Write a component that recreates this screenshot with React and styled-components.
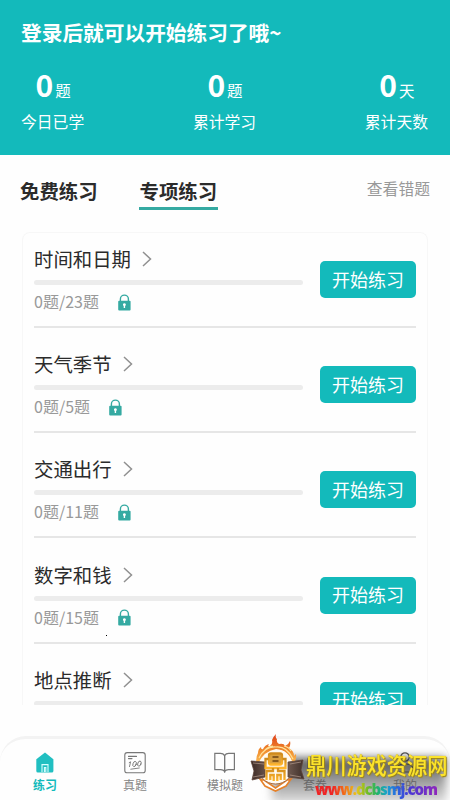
import React from 'react';
import styled, { createGlobalStyle } from 'styled-components';

const COLOR_TEAL = '#13babb';
const COLOR_ACCENT = '#35aaa2';
const COLOR_TEXT = '#2b2b2b';
const COLOR_MUTED = '#999';
const COLOR_LINE = '#e6e6e6';

const GlobalStyle = createGlobalStyle`
  * {
    box-sizing: border-box;
  }

  body {
    margin: 0;
    background: #fff;
    font-family: 'Noto Sans CJK SC', sans-serif;
  }
`;

const Screen = styled.div`
  position: relative;
  display: flex;
  flex-direction: column;
  width: 450px;
  height: 800px;
  overflow: hidden;
  background: #fefefe;
`;

const Header = styled.header`
  flex: none;
  height: 155px;
  padding: 17px 22px 0 21px;
  color: #fff;
  background: ${COLOR_TEAL};
`;

const Greeting = styled.h1`
  margin: 0;
  font-size: 20.7px;
  font-weight: 700;
  line-height: 30px;
`;

const Stats = styled.div`
  display: flex;
  justify-content: space-between;
  margin-top: 16px;
`;

const Stat = styled.div`
  display: flex;
  flex-direction: column;
  align-items: center;
`;

const StatValue = styled.div`
  display: flex;
  align-items: baseline;
  height: 44px;
  padding-left: 1px;
  font-size: 30px;
  font-weight: 700;
  line-height: 42px;
`;

const StatUnit = styled.span`
  margin-left: 2px;
  font-size: 15.5px;
  font-weight: 400;
`;

const StatLabel = styled.div`
  font-size: 15.8px;
  line-height: 29px;
`;

const Tabs = styled.div`
  display: flex;
  flex: none;
  align-items: flex-start;
  height: 77px;
  padding: 21px 20px 0 19px;
`;

const Tab = styled.div`
  margin-right: 40px;
  padding: 0 1px 2px;
  border-bottom: 3px solid ${props => (props.$active ? COLOR_ACCENT : 'transparent')};
  color: ${COLOR_TEXT};
  font-size: 19.4px;
  font-weight: 700;
  line-height: 29px;
`;

const MistakesLink = styled.a`
  margin-left: auto;
  padding-top: 1px;
  color: ${COLOR_MUTED};
  font-size: 15.8px;
  line-height: 24px;
`;

const Card = styled.ul`
  flex: none;
  height: 473px;
  margin: 0 22px;
  padding: 0 11px;
  overflow: hidden;
  list-style: none;
  border: 1px solid #f7f7f7;
  border-bottom: 0;
  border-radius: 8px 8px 0 0;
`;

const Row = styled.li`
  height: 105.2px;
  padding-top: 11px;
`;

const RowContent = styled.div`
  display: flex;
  justify-content: space-between;
  height: 84px;
  border-bottom: 2px solid ${COLOR_LINE};
`;

const RowMain = styled.div`
  width: 269px;
`;

const RowTitle = styled.div`
  display: flex;
  align-items: center;
  height: 30px;
  color: ${COLOR_TEXT};
  font-size: 19.4px;
  line-height: 30px;

  svg {
    margin-left: 11px;
  }
`;

const Track = styled.div`
  height: 5px;
  margin-top: 6px;
  border-radius: 3px;
  background: #ececec;
`;

const Progress = styled.div`
  display: flex;
  align-items: center;
  height: 24px;
  margin-top: 4px;
  color: ${COLOR_MUTED};
  font-size: 16px;

  svg {
    margin: 2px 0 0 18.6px;
  }
`;

const StartButton = styled.button`
  width: 96px;
  height: 37px;
  margin-top: 17px;
  padding: 0 0 2px;
  border: 0;
  border-radius: 5px;
  color: #fff;
  background: ${COLOR_TEAL};
  font-family: inherit;
  font-size: 18px;
  line-height: 34px;
`;

const NavBar = styled.nav`
  display: grid;
  grid-template-columns: repeat(5, 1fr);
  flex: none;
  height: 64px;
  margin-top: 31px;
  padding-top: 13px;
  border-top: 3px solid #f3f3f3;
  border-radius: 26px 26px 0 0;
`;

const NavItem = styled.div`
  display: flex;
  flex-direction: column;
  align-items: center;
  color: ${props => (props.$active ? COLOR_TEAL : '#858585')};
  font-size: 12px;
  font-weight: ${props => (props.$active ? 700 : 400)};
  line-height: 18px;

  svg {
    margin-bottom: 2px;
  }
`;

const Speck = styled.i`
  position: absolute;
  top: 635px;
  left: 106px;
  width: 1px;
  height: 1px;
  background: #000;
`;

const Watermark = styled.div`
  position: absolute;
  top: 733px;
  left: 248px;
  width: 202px;
  height: 67px;
  overflow: hidden;
`;

const Haze = styled.div`
  position: absolute;
  top: 25px;
  left: 24px;
  width: 174px;
  height: 46px;
  background: linear-gradient(rgba(30, 30, 30, 0.8), rgba(80, 80, 80, 0.6) 45%, rgba(120, 120, 120, 0.2));
  filter: blur(5px);
`;

const Emblem = styled.svg`
  position: absolute;
  top: 0;
  left: 0;
`;

const SiteName = styled.div`
  position: absolute;
  top: 17px;
  left: 58px;
  color: #fbe32c;
  font-size: 20.2px;
  font-weight: 500;
  line-height: 30px;
  white-space: nowrap;
  text-shadow: 0 0 1px #b89b12, 1px 1px 1px #9a8212;
  transform: scaleY(1.14);
`;

const SiteUrl = styled.div`
  position: absolute;
  top: 46px;
  left: 67px;
  color: transparent;
  background: linear-gradient(90deg, #ef2424 0 14%, #f36c18 24%, #e9c51c 34%, #72bd24 43%, #20b46b 51%, #1aa2d0 59%, #2868e0 67%, #4b37d4 78%, #8e27bb 100%);
  background-clip: text;
  font-family: 'Open Sans', sans-serif;
  font-size: 15px;
  font-weight: 800;
  letter-spacing: -1.1px;
  line-height: 20px;
`;

const Chevron = () => (
  <svg width="10" height="16" viewBox="0 0 10 16" fill="none" stroke="#909090" strokeWidth="1.5">
    <path d="M1 1l7.5 7L1 15" />
  </svg>
);

const Lock = () => (
  <svg width="13" height="17" viewBox="0 0 13 17">
    <path d="M2.4 8V5.1a4 4 0 0 1 8 0V8" fill="none" stroke={COLOR_ACCENT} strokeWidth="1.4" />
    <rect x=".2" y="6.7" width="12.4" height="9.8" rx="1" fill={COLOR_ACCENT} />
    <path d="M6.4 9.2a1.5 1.5 0 0 1 .7 2.8v1.9H5.7V12a1.5 1.5 0 0 1 .7-2.8z" fill="#fff" />
  </svg>
);

const HomeIcon = () => (
  <svg width="22" height="22" viewBox="0 0 22 22">
    <path d="M11 .6l8.4 6.6V19q0 1.6-1.6 1.6H3.9q-1.6 0-1.6-1.6V7.2z" fill="#21bfc1" />
    <path d="M8 20v-7.4h6V20M10.4 20v-4.4h1.4V20" fill="none" stroke="#d9ffff" strokeWidth="1.1" />
  </svg>
);

const PaperIcon = () => (
  <svg width="22" height="22" viewBox="0 0 22 22" fill="none" stroke="#777" strokeWidth="1.1" strokeLinecap="round">
    <rect x=".8" y=".6" width="20.4" height="20.2" rx="2.4" />
    <path d="M4.5 4.4h8M4.5 6.6h3.5" />
    <path d="M5.2 10.6l1.4-.8-1.1 4.8M6.8 17.2l8.5-1.2" strokeWidth=".9" />
    <ellipse cx="10.6" cy="12" rx="1.6" ry="2.7" transform="rotate(20 10.6 12)" strokeWidth=".9" />
    <ellipse cx="15.4" cy="11.6" rx="1.6" ry="2.7" transform="rotate(20 15.4 11.6)" strokeWidth=".9" />
  </svg>
);

const BookIcon = () => (
  <svg width="22" height="22" viewBox="0 0 22 22" fill="none" stroke="#777" strokeWidth="1.2">
    <path d="M10.6 3.6Q9.3 1.4 6.5 1.4H.8v16.2h6q2.6 0 3.8 1.8 1.2-1.8 3.8-1.8h6V1.4h-5.7q-2.8 0-4.1 2.2zV20.4" />
    <path d="M10.6 3.6v16.8" />
  </svg>
);

const PlanIcon = () => (
  <svg width="22" height="22" viewBox="0 0 22 22" fill="none" stroke="#777" strokeWidth="1.2">
    <rect x="4" y="5" width="14" height="14" rx="2" />
    <path d="M7 9h8M7 13h8" />
  </svg>
);

const UserIcon = () => (
  <svg width="22" height="22" viewBox="0 0 22 22" fill="none" stroke="#555" strokeWidth="1.2">
    <circle cx="11" cy="5" r="4.2" />
    <path d="M3 20v-3q0-5 8-5t8 5v3z" />
  </svg>
);

const stats = [
  { unit: '题', label: '今日已学' },
  { unit: '题', label: '累计学习' },
  { unit: '天', label: '累计天数' },
];

const topics = [
  { title: '时间和日期', total: 23 },
  { title: '天气季节', total: 5 },
  { title: '交通出行', total: 11 },
  { title: '数字和钱', total: 15 },
  { title: '地点推断' },
];

const navItems = [
  { label: '练习', Icon: HomeIcon },
  { label: '真题', Icon: PaperIcon },
  { label: '模拟题', Icon: BookIcon },
  { label: '套卷', Icon: PlanIcon },
  { label: '我的', Icon: UserIcon },
];

const SiteEmblem = () => (
  <Emblem width="66" height="67" viewBox="0 0 66 67">
    <defs>
      <linearGradient id="flame" x2="0" y2="1">
        <stop offset="0" stopColor="#dd3c18" />
        <stop offset=".5" stopColor="#f08a2c" />
        <stop offset="1" stopColor="#ffc65c" />
      </linearGradient>
      <linearGradient id="gold" x2="0" y2="1">
        <stop offset="0" stopColor="#cf8a1c" />
        <stop offset="1" stopColor="#ffb52c" />
      </linearGradient>
      <linearGradient id="ribbon" x2="1" y2="0">
        <stop offset="0" stopColor="#3c2a25" />
        <stop offset=".5" stopColor="#8d7468" />
        <stop offset="1" stopColor="#40302a" />
      </linearGradient>
    </defs>
    <path d="M12 46l5 7 10.5 5L38 53l5-7-4 1-11.5 8L16 47z" fill="#fff" stroke="#e6822a" strokeWidth="1.6" />
    <circle cx="27.5" cy="33" r="18" fill="#fffaf2" stroke="#a8683a" strokeWidth="1" />
    <path d="M9 33Q7 25 10 20q0-4 3-6 0 3 2 2 2-4 6-5-2 3 1 2 3-2 2-6 1-3 4-6-1 4 1 5-1 3 2 5 5-1 6 2 4-2 5-5 1 4-1 7 5 3 5 8l2-2q1 6-3 11Q42 17 28 16 15 18 9 33z" fill="url(#flame)" />
    <path d="M11 25Q17 13 28 14q11-1 17 12M17 17q4-4 8-4M36 13q5 1 7 5" fill="none" stroke="#ffe29a" strokeWidth="1.2" />
    <path d="M3 28l14 1v15l-13 3 2-9zM40 29l15-2-2 10 3 9-16-2z" fill="url(#ribbon)" stroke="#5d443a" strokeWidth=".8" />
    <path d="M5 30l11 1M5 44l11-2M42 31l11-2M42 42l11 2" stroke="#b49b8c" strokeWidth=".7" />
    <rect x="18" y="20" width="20" height="28" rx="4" fill="#fffaf0" />
    <g fill="none" stroke="url(#gold)" strokeWidth="2.3" transform="translate(-1.5 0)">
      <rect x="22.5" y="20.5" width="13" height="11" rx="2" fill="#d9a040" />
      <path d="M22 26h-3v9h20v-9h-3" />
      <path d="M26.5 35v3H20v9M31.5 35v3H38v9M23.8 47v-5h3.4v6M34.2 47v-5h-3.4v6" />
    </g>
    <path d="M24.5 24h6M24.5 28h6" stroke="#6b4315" strokeWidth="1.3" />
  </Emblem>
);

const App = () => (
  <Screen>
    <GlobalStyle />
    <Header>
      <Greeting>登录后就可以开始练习了哦~</Greeting>
      <Stats>
        {stats.map(stat => (
          <Stat key={stat.label}>
            <StatValue>
              0
              <StatUnit>{stat.unit}</StatUnit>
            </StatValue>
            <StatLabel>{stat.label}</StatLabel>
          </Stat>
        ))}
      </Stats>
    </Header>
    <Tabs>
      <Tab>免费练习</Tab>
      <Tab $active>专项练习</Tab>
      <MistakesLink>查看错题</MistakesLink>
    </Tabs>
    <Card>
      {topics.map(topic => (
        <Row key={topic.title}>
          <RowContent>
            <RowMain>
              <RowTitle>
                {topic.title}
                <Chevron />
              </RowTitle>
              <Track />
              {
                topic.total &&
                <Progress>
                  {`0题/${topic.total}题`}
                  <Lock />
                </Progress>
              }
            </RowMain>
            <StartButton>开始练习</StartButton>
          </RowContent>
        </Row>
      ))}
    </Card>
    <NavBar>
      {navItems.map(({ label, Icon }, index) => (
        <NavItem key={label} $active={index === 0}>
          <Icon />
          {label}
        </NavItem>
      ))}
    </NavBar>
    <Speck />
    <Watermark>
      <Haze />
      <SiteEmblem />
      <SiteName>鼎川游戏资源网</SiteName>
      <SiteUrl>www.dcbsmj.com</SiteUrl>
    </Watermark>
  </Screen>
);

export default App;
